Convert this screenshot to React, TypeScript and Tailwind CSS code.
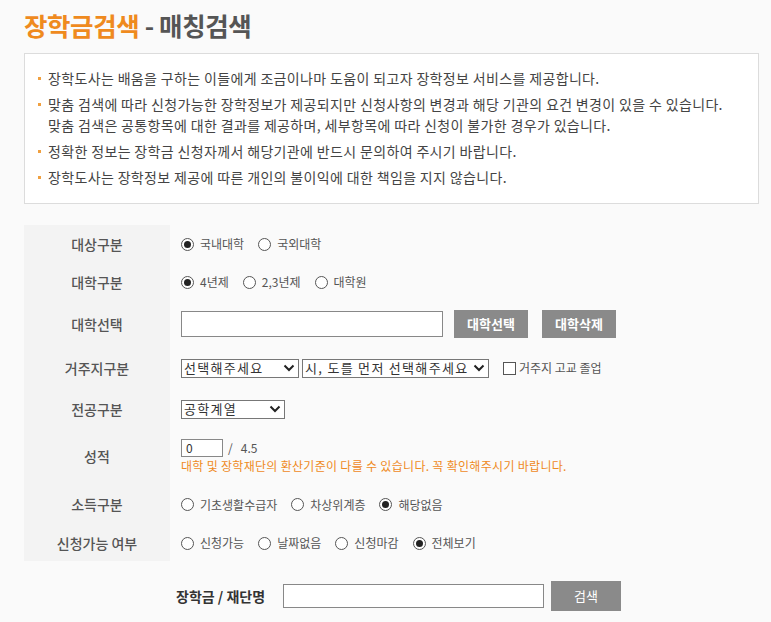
import React from "react";

const Radio = ({ checked, label }: { checked?: boolean; label: string }) => (
  <label className="flex items-center gap-[6px] mr-[14px]">
    <span className="w-[13px] h-[13px] rounded-full border border-[#555] bg-white flex items-center justify-center">
      {checked && <span className="w-[7px] h-[7px] rounded-full bg-[#222]" />}
    </span>
    <span>{label}</span>
  </label>
);

const Chevron = () => (
  <svg width="12" height="8" viewBox="0 0 12 8" className="shrink-0">
    <path d="M1.5 1.5 L6 6 L10.5 1.5" fill="none" stroke="#222" strokeWidth="2" />
  </svg>
);

const Select = ({ w, text }: { w: string; text: string }) => (
  <div className={`${w} h-[19px] border border-[#777] bg-white flex items-center justify-between pl-[2px] pr-[3px] text-[13px] text-[#333]`}>
    <span className="whitespace-nowrap tracking-[1.3px]">{text}</span>
    <Chevron />
  </div>
);

const Row = ({ label, h, children }: { label: string; h: string; children: React.ReactNode }) => (
  <div className={`flex ${h}`}>
    <div className="w-[146px] bg-[#f3f3f3] flex items-center justify-center text-[14px] text-[#555] font-medium">
      {label}
    </div>
    <div className="flex-1 pl-[11px] flex items-center">{children}</div>
  </div>
);

export default function App() {
  const bullets = [
    ["장학도사는 배움을 구하는 이들에게 조금이나마 도움이 되고자 장학정보 서비스를 제공합니다."],
    [
      "맞춤 검색에 따라 신청가능한 장학정보가 제공되지만 신청사항의 변경과 해당 기관의 요건 변경이 있을 수 있습니다.",
      "맞춤 검색은 공통항목에 대한 결과를 제공하며, 세부항목에 따라 신청이 불가한 경우가 있습니다.",
    ],
    ["정확한 정보는 장학금 신청자께서 해당기관에 반드시 문의하여 주시기 바랍니다."],
    ["장학도사는 장학정보 제공에 따른 개인의 불이익에 대한 책임을 지지 않습니다."],
  ];
  return (
    <div
      className="w-[771px] h-[622px] bg-[#fafafa] overflow-hidden"
      style={{ fontFamily: '"Noto Sans CJK KR", "Noto Sans", sans-serif' }}
    >
      <div className="pl-[24px] pt-[7px] h-[53px]">
        <h1 className="text-[25.5px] font-bold leading-[36px] tracking-[-0.4px]">
          <span className="text-[#ef8a1e]">장학금검색</span>
          <span className="text-[#555]"> - 매칭검색</span>
        </h1>
      </div>
      <div className="mx-[24px] w-[735px] h-[151px] bg-white border border-[#dcdcdc] pt-[14px] pl-[13px] text-[14px] tracking-[0.35px] text-[#444] leading-[21px]">
        {bullets.map((b, i) => (
          <div key={i} className="flex mb-[5px]">
            <span className="w-[10px] shrink-0 flex pt-[9px]">
              <span className="w-[3px] h-[3px] bg-[#f0a040]" />
            </span>
            <div>
              {b.map((t, j) => (
                <div key={j}>{t}</div>
              ))}
            </div>
          </div>
        ))}
      </div>
      <div className="ml-[24px] mt-[21px] text-[12px] text-[#555]">
        <Row label="대상구분" h="h-[38px]">
          <Radio checked label="국내대학" />
          <Radio label="국외대학" />
        </Row>
        <Row label="대학구분" h="h-[38px]">
          <Radio checked label="4년제" />
          <Radio label="2,3년제" />
          <Radio label="대학원" />
        </Row>
        <Row label="대학선택" h="h-[46px]">
          <div className="w-[262px] h-[26px] border border-[#888] bg-white" />
          <button className="ml-[11px] w-[74px] h-[28px] bg-[#8a8a8a] text-white text-[13px] font-bold">대학선택</button>
          <button className="ml-[14px] w-[74px] h-[28px] bg-[#8a8a8a] text-white text-[13px] font-bold">대학삭제</button>
        </Row>
        <Row label="거주지구분" h="h-[42px]">
          <Select w="w-[118px]" text="선택해주세요" />
          <div className="w-[3px]" />
          <Select w="w-[187px]" text="시, 도를 먼저 선택해주세요" />
          <span className="ml-[14px] w-[13px] h-[13px] border border-[#555] bg-white" />
          <span className="ml-[3px] text-[12px]">거주지 고교 졸업</span>
        </Row>
        <Row label="전공구분" h="h-[40px]">
          <Select w="w-[104px]" text="공학계열" />
        </Row>
        <Row label="성적" h="h-[55px]">
          <div className="flex flex-col">
            <div className="flex items-center">
              <div className="w-[42px] h-[18px] border border-[#888] bg-white text-[12px] pl-[4px] leading-[16px] text-[#333]">0</div>
              <span className="ml-[5px] text-[12px]">/&nbsp;&nbsp;&nbsp;4.5</span>
            </div>
            <div className="text-[#ef8a1e] text-[12px] mt-[0px] tracking-[0.3px]">
              대학 및 장학재단의 환산기준이 다를 수 있습니다. 꼭 확인해주시기 바랍니다.
            </div>
          </div>
        </Row>
        <Row label="소득구분" h="h-[41px]">
          <Radio label="기초생활수급자" />
          <Radio label="차상위계층" />
          <Radio checked label="해당없음" />
        </Row>
        <Row label="신청가능 여부" h="h-[36px]">
          <Radio label="신청가능" />
          <Radio label="날짜없음" />
          <Radio label="신청마감" />
          <Radio checked label="전체보기" />
        </Row>
      </div>
      <div className="flex items-center mt-[20px] ml-[176px]">
        <span className="text-[14px] font-bold text-[#333] w-[107px]">장학금 / 재단명</span>
        <div className="w-[261px] h-[24px] border border-[#888] bg-white" />
        <button className="ml-[7px] w-[70px] h-[30px] bg-[#8a8a8a] text-white text-[13px]">검색</button>
      </div>
    </div>
  );
}
